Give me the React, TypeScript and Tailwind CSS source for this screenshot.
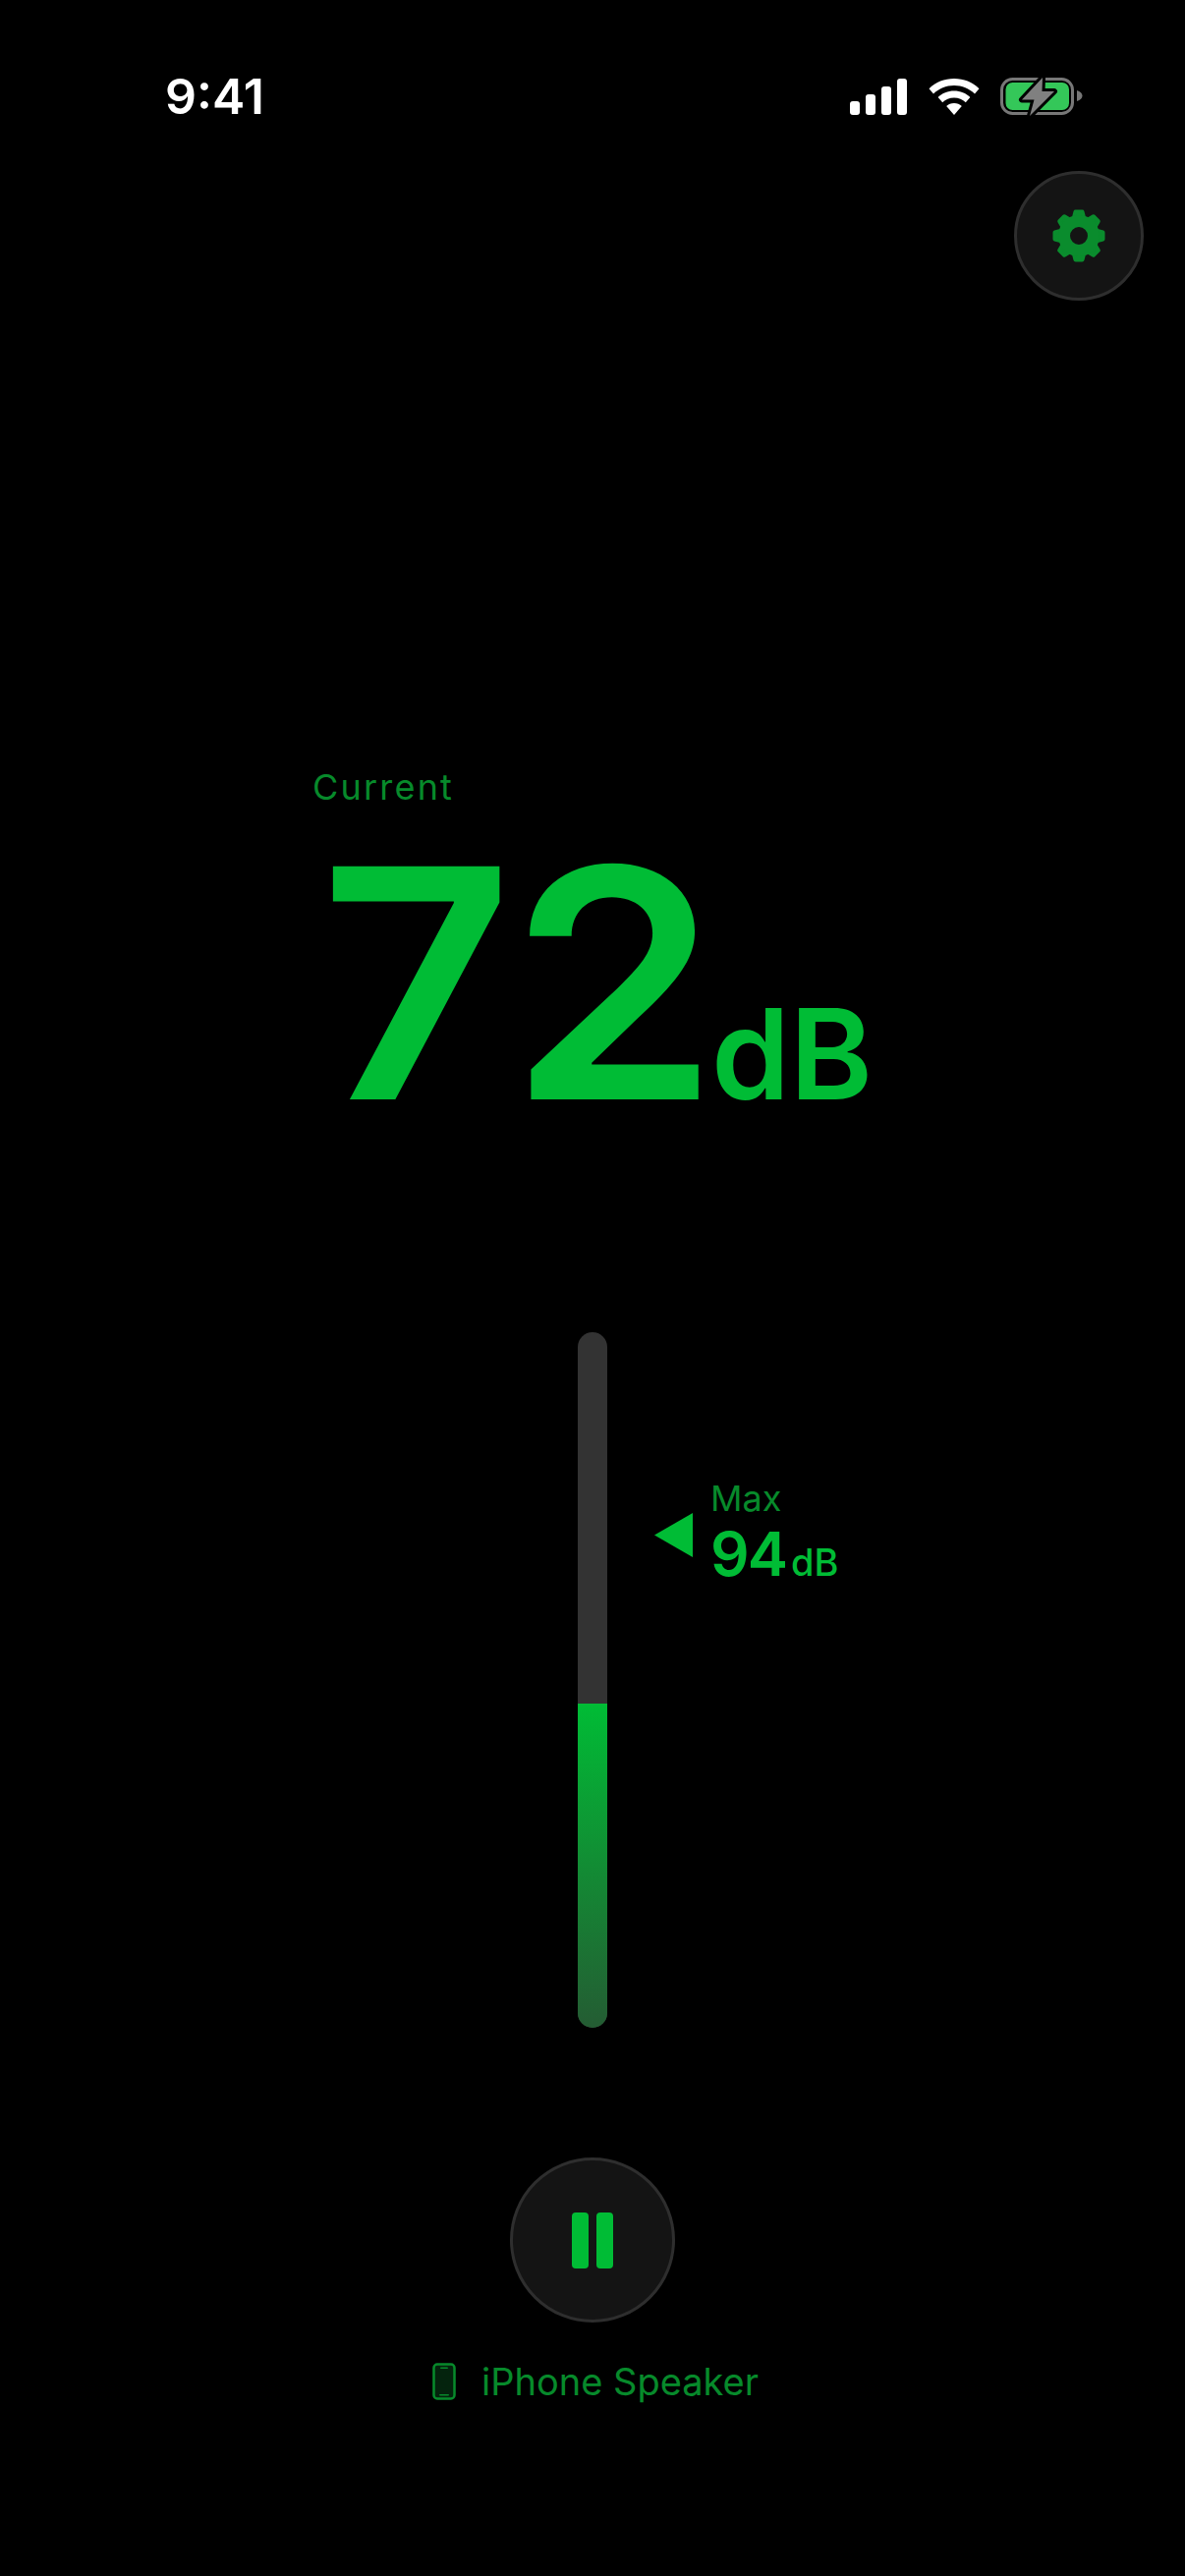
const GREEN = '#00bc35';

function Signal() {
  return (
    <svg width="58" height="37" viewBox="0 0 58 37" fill="#fff">
      <rect x="0" y="23" width="10" height="14" rx="3" />
      <rect x="16" y="16" width="10" height="21" rx="3" />
      <rect x="32" y="8" width="10" height="29" rx="3" />
      <rect x="48" y="0" width="10" height="37" rx="3" />
    </svg>
  );
}

function Wifi() {
  return (
    <svg width="52" height="37" viewBox="0 0 52 37" fill="#fff">
      <path d="M26 0C16 0 7.5 3.6 0.5 10.2L5 15.5C10.6 10.2 17.8 7 26 7S41.4 10.2 47 15.5L51.5 10.2C44.5 3.6 36 0 26 0Z" />
      <path d="M26 12.5C19.6 12.5 14 14.8 9.6 19L14.2 24.2C17.3 21.3 21.4 19.5 26 19.5S34.7 21.3 37.8 24.2L42.4 19C38 14.8 32.4 12.5 26 12.5Z" />
      <path d="M26 25C22.9 25 20.2 26.1 18.2 28L26 37L33.8 28C31.8 26.1 29.1 25 26 25Z" />
    </svg>
  );
}

const BOLT = 'M45 3L24 25.5H36.5L32 42L57 17H44.5Z';

function Battery() {
  return (
    <svg width="86" height="44" viewBox="0 0 86 44">
      <rect x="3.5" y="4.5" width="72" height="35" rx="11" fill="none" stroke="#777" strokeWidth="3" />
      <rect x="7.5" y="8" width="64.5" height="28" rx="7" fill="#34c759" />
      <path d="M80 16C83.5 17 85.5 19 85.5 21.5S83.5 26 80 27Z" fill="#777" />
      {/* outline first, so the grey fill keeps its full width */}
      <path d={BOLT} fill="#000" stroke="#000" strokeWidth="6" strokeLinejoin="round" />
      <path d={BOLT} fill="#808080" />
    </svg>
  );
}

function Gear() {
  const teeth = [0, 45, 90, 135, 180, 225, 270, 315];
  return (
    <svg width="54" height="54" viewBox="0 0 54 54">
      <g fill="#0a8c2d" stroke="#0a8c2d" strokeWidth="4" strokeLinejoin="round">
        {teeth.map((a) => (
          <path key={a} d="M23.5 2.5H30.5L33 12H21Z" transform={`rotate(${a} 27 27)`} />
        ))}
      </g>
      <path
        fillRule="evenodd"
        fill="#0a8c2d"
        d="M27 6A21 21 0 1 0 27 48A21 21 0 1 0 27 6ZM27 18A9 9 0 1 1 27 36A9 9 0 1 1 27 18Z"
      />
    </svg>
  );
}

function PhoneIcon() {
  return (
    <svg width="24" height="38" viewBox="0 0 24 38">
      <rect x="1.5" y="1.5" width="21" height="35" rx="3.5" fill="#04230d" stroke="#078a2b" strokeWidth="2.5" />
      <rect x="8" y="4.5" width="8" height="1.6" rx="0.8" fill="#078a2b" />
      <rect x="7" y="32" width="10" height="1.6" rx="0.8" fill="#078a2b" />
    </svg>
  );
}

export default function App() {
  return (
    <div className="w-[1206px] h-[2622px] bg-black flex flex-col font-['Inter',sans-serif] overflow-hidden">
      {/* Status bar */}
      <div className="h-[174px] flex flex-col">
        <div className="flex items-center justify-between pt-[76px] pl-[168px] pr-[104px]">
          <span className="text-[50px] leading-[44px] font-semibold text-white">9:41</span>
          <div className="flex items-center">
            <Signal />
            <span className="ml-[22px]"><Wifi /></span>
            <span className="ml-[19px]"><Battery /></span>
          </div>
        </div>
      </div>

      {/* Settings */}
      <div className="flex justify-end pr-[42px]">
        <button className="size-[132px] rounded-full bg-[#141414] border-[3px] border-[#2e2e2e] flex items-center justify-center">
          <Gear />
        </button>
      </div>

      {/* Current reading */}
      <div className="mt-[473px] pl-[318px] flex flex-col">
        <span className="text-[36px] leading-[44px] text-[#078a2b] tracking-[2.2px]">Current</span>
        <div className="flex items-baseline mt-[33px] h-[290px] ml-[7px]">
          <span className="inline-block origin-left scale-x-[1.05] text-[326px] leading-[290px] font-semibold text-[#00bc35] tracking-[-4px]">72</span>
          <span className="text-[128px] leading-none font-semibold text-[#00bc35] ml-[16px]">dB</span>
        </div>
      </div>

      {/* Level bar and max marker */}
      <div className="relative mt-[210px] flex justify-center">
        <div className="w-[30px] h-[708px] rounded-full bg-[#333] overflow-hidden flex flex-col justify-end">
          <div className="h-[330px]" style={{ background: `linear-gradient(to bottom, ${GREEN}, #245c33)` }} />
        </div>
        <div className="absolute left-[666px] top-[149px] flex items-center gap-[18px]">
          <svg width="39" height="45" viewBox="0 0 39 45" fill={GREEN}><path d="M0 22.5L39 0V45Z" /></svg>
          <div className="flex flex-col">
            <span className="text-[36px] leading-[40px] text-[#078a2b]">Max</span>
            <div className="flex items-baseline mt-[5px]">
              <span className="text-[62px] leading-[64px] font-semibold text-[#00bc35] tracking-[-2px]">94</span>
              <span className="text-[38px] font-medium text-[#00bc35] ml-[5px]">dB</span>
            </div>
          </div>
        </div>
      </div>

      {/* Pause control */}
      <div className="mt-[132px] flex flex-col items-center">
        <button className="size-[168px] rounded-full bg-[#141414] border-[3px] border-[#2e2e2e] flex items-center justify-center gap-[8px]">
          <span className="w-[17px] h-[57px] rounded-[4px] bg-[#00bc35]" />
          <span className="w-[17px] h-[57px] rounded-[4px] bg-[#00bc35]" />
        </button>
        <div className="mt-[37px] ml-[6px] flex items-center gap-[26px]">
          <PhoneIcon />
          <span className="text-[38px] leading-[46px] text-[#078a2b]">iPhone Speaker</span>
        </div>
      </div>
    </div>
  );
}
